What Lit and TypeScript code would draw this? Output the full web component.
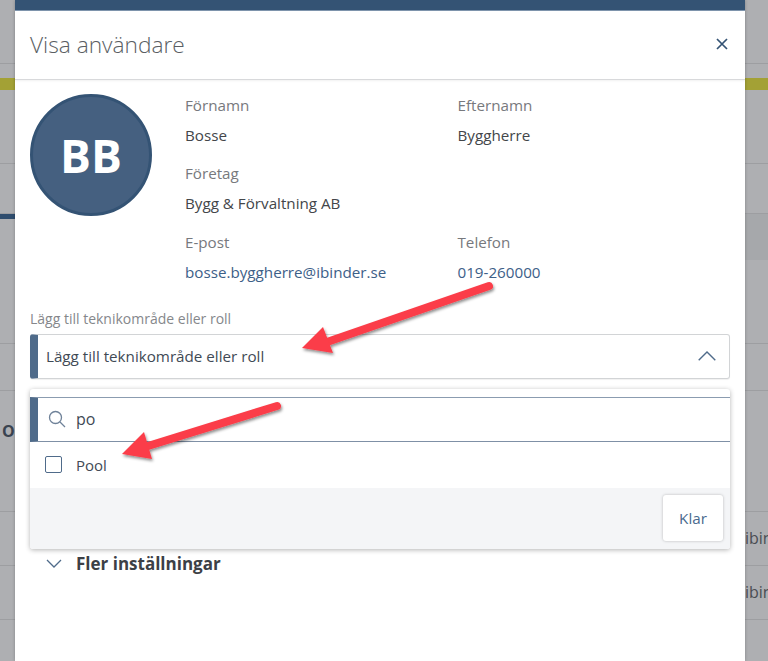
import { LitElement, html, css } from "lit";
import { customElement } from "lit/decorators.js";

@customElement("app-root")
export class AppRoot extends LitElement {
  static styles = css`
    :host { display: block; position: relative; width: 768px; height: 661px; overflow: hidden; background: #aeafb2; font-family: "Open Sans", "Liberation Sans", sans-serif; color: #3f4347; }
    .bg { display: flex; flex-direction: column; height: 661px; }
    .bg > div { flex: none; box-sizing: border-box; border-bottom: 1px solid #9d9ea1; }
    .r1 { height: 64px; }
    .bg > .bar { height: 26px; border: 0; }
    .bar::after { content: ""; display: block; margin-top: 14px; height: 12px; background: #a3a135; }
    .r2 { height: 74px; }
    .r3 { height: 50px; }
    .r4 { height: 130px; }
    .r5 { height: 47px; }
    .r6 { height: 121px; }
    .r7 { height: 54px; }
    .r8 { height: 54px; }
    .navy { position: absolute; left: 0; top: 214px; width: 15px; height: 5px; background: #2f4d6e; }
    .edge-o { position: absolute; left: 2px; top: 420px; font-weight: 700; font-size: 16px; color: #3a4350; }
    .edge-r { position: absolute; left: 745px; width: 23px; overflow: hidden; font-size: 16px; color: #4a4d52; white-space: nowrap; }
    .er1 { top: 527px; } .er2 { top: 581px; }
    .band { position: absolute; left: 745px; top: 214px; width: 23px; height: 46px; background: #a6a8ab; }
    .modal { position: absolute; left: 15px; top: 0; width: 730px; height: 661px; background: #fff; box-shadow: 0 0 3px rgba(0,0,0,.25); display: flex; flex-direction: column; }
    .topbar { height: 10px; background: #345374; border-bottom: 1px solid #7f95ad; flex: none; }
    .head { height: 66px; flex: none; padding: 0 15px 2px; border-bottom: 1px solid #d8d9db; box-shadow: 0 1px 2px rgba(0,0,0,.06); display: flex; align-items: center; justify-content: space-between; }
    .title { font-size: 22.7px; font-weight: 300; color: #5a5e63; }
    .close { width: 14px; height: 14px; margin-right: 1px; display: block; }
    .body { padding: 14px 15px 0; }
    .profile { display: flex; }
    .avatar { width: 122px; height: 122px; box-sizing: border-box; border-radius: 50%; background: #456080; border: 3px solid #345374; color: #fff; font-size: 46px; font-weight: 700; display: flex; align-items: center; justify-content: center; flex: none; }
    .fields { margin-left: 33px; padding-top: 1px; display: grid; grid-template-columns: 272.5px 1fr; grid-auto-rows: 68.4px; font-size: 15.2px; line-height: 20px; }
    .field { display: flex; flex-direction: column; gap: 10px; }
    .lab { color: #77797d; }
    .val { color: #43464a; }
    .val a { color: #3d6088; text-decoration: none; }
    .span { grid-column: 1 / span 2; }
    .ll { margin-top: 8.8px; font-size: 14px; line-height: 20px; color: #85878b; }
    .select { margin-top: 5px; height: 45px; box-sizing: border-box; border: 1px solid #d2d4d6; border-left: 8px solid #4f6b8a; border-radius: 3px; display: flex; align-items: center; justify-content: space-between; padding: 0 13px 0 8px; font-size: 15.2px; color: #3f4a55; box-shadow: 0 1px 1px rgba(0,0,0,.06); }
    .chev { width: 18px; height: 10px; display: block; }
    .drop { margin-top: 10px; height: 160px; border-radius: 3px; box-shadow: 0 1px 5px rgba(0,0,0,.3); background: #fff; display: flex; flex-direction: column; padding-top: 8px; box-sizing: border-box; }
    .search { height: 45px; flex: none; box-sizing: border-box; border-top: 1px solid #8b9cb0; border-bottom: 1px solid #7f90a6; border-left: 8px solid #4f6b8a; display: flex; align-items: center; padding-left: 10px; gap: 10px; font-size: 16px; color: #3f4a55; }
    .search svg { width: 18px; height: 18px; display: block; }
    .opt { height: 46px; flex: none; display: flex; align-items: center; padding-left: 15px; gap: 14px; font-size: 15px; color: #424a55; }
    .box { width: 17px; height: 17px; box-sizing: border-box; border: 1.5px solid #4f6b8a; border-radius: 2px; }
    .foot { flex: 1; background: #f4f5f7; display: flex; justify-content: flex-end; align-items: center; padding-right: 7px; border-radius: 0 0 3px 3px; }
    .btn { width: 60px; height: 46px; background: #fff; border-radius: 3px; box-shadow: 0 0 3px rgba(0,0,0,.25); display: flex; align-items: center; justify-content: center; font-size: 15.2px; color: #4a6a8e; }
    .more { margin-top: 3px; padding-left: 16px; display: flex; align-items: center; gap: 14px; font-size: 17px; font-weight: 700; color: #3c4046; height: 24px; }
    .more svg { width: 16px; height: 9px; display: block; }
    .arrows { position: absolute; left: 0; top: 0; width: 768px; height: 661px; pointer-events: none; overflow: visible; }
  `;

  render() {
    return html`
      <div class="bg">
        <div class="r1"></div><div class="bar"></div><div class="r2"></div><div class="r3"></div>
        <div class="r4"></div><div class="r5"></div><div class="r6"></div><div class="r7"></div><div class="r8"></div>
      </div>
      <div class="navy"></div>
      <div class="band"></div>
      <div class="edge-o">O</div>
      <div class="edge-r er1">ibinder</div>
      <div class="edge-r er2">ibinder</div>
      <div class="modal">
        <div class="topbar"></div>
        <div class="head">
          <div class="title">Visa användare</div>
          <svg class="close" viewBox="0 0 14 14"><path d="M2 2l10 10M12 2L2 12" stroke="#345374" stroke-width="1.7" fill="none"/></svg>
        </div>
        <div class="body">
          <div class="profile">
            <div class="avatar">BB</div>
            <div class="fields">
              <div class="field"><span class="lab">Förnamn</span><span class="val">Bosse</span></div>
              <div class="field"><span class="lab">Efternamn</span><span class="val">Byggherre</span></div>
              <div class="field span"><span class="lab">Företag</span><span class="val">Bygg &amp; Förvaltning AB</span></div>
              <div class="field"><span class="lab">E-post</span><span class="val"><a>bosse.byggherre@ibinder.se</a></span></div>
              <div class="field"><span class="lab">Telefon</span><span class="val"><a>019-260000</a></span></div>
            </div>
          </div>
          <div class="ll">Lägg till teknikområde eller roll</div>
          <div class="select">
            <span>Lägg till teknikområde eller roll</span>
            <svg class="chev" viewBox="0 0 18 10"><path d="M.7 9.3L9 1l8.3 8.3" stroke="#4f6b8a" stroke-width="1.4" fill="none"/></svg>
          </div>
          <div class="drop">
            <div class="search">
              <svg viewBox="0 0 18 18"><circle cx="7.5" cy="7.5" r="6" stroke="#6f8299" stroke-width="1.3" fill="none"/><path d="M12 12l5 5" stroke="#6f8299" stroke-width="1.3"/></svg>
              <span>po</span>
            </div>
            <div class="opt"><span class="box"></span><span>Pool</span></div>
            <div class="foot"><div class="btn">Klar</div></div>
          </div>
          <div class="more">
            <svg viewBox="0 0 16 9"><path d="M1 1l7 7 7-7" stroke="#4f6b8a" stroke-width="1.3" fill="none"/></svg>
            <span>Fler inställningar</span>
          </div>
        </div>
      </div>
      <svg class="arrows" viewBox="0 0 768 661">
        <defs><filter id="sh" x="-20%" y="-40%" width="140%" height="200%"><feDropShadow dx="1" dy="2" stdDeviation="1.6" flood-color="#000" flood-opacity=".45"/></filter></defs>
        <g filter="url(#sh)">
          <path d="M327 342L489 286" stroke="#fb3d48" stroke-width="8" stroke-linecap="round" fill="none"/>
          <polygon points="302,348 323,327 333,353" fill="#fb3d48"/>
        </g>
        <g filter="url(#sh)">
          <path d="M148 446L277 406" stroke="#fb3d48" stroke-width="8" stroke-linecap="round" fill="none"/>
          <polygon points="122,454 144,432 152,459" fill="#fb3d48"/>
        </g>
      </svg>
    `;
  }
}
